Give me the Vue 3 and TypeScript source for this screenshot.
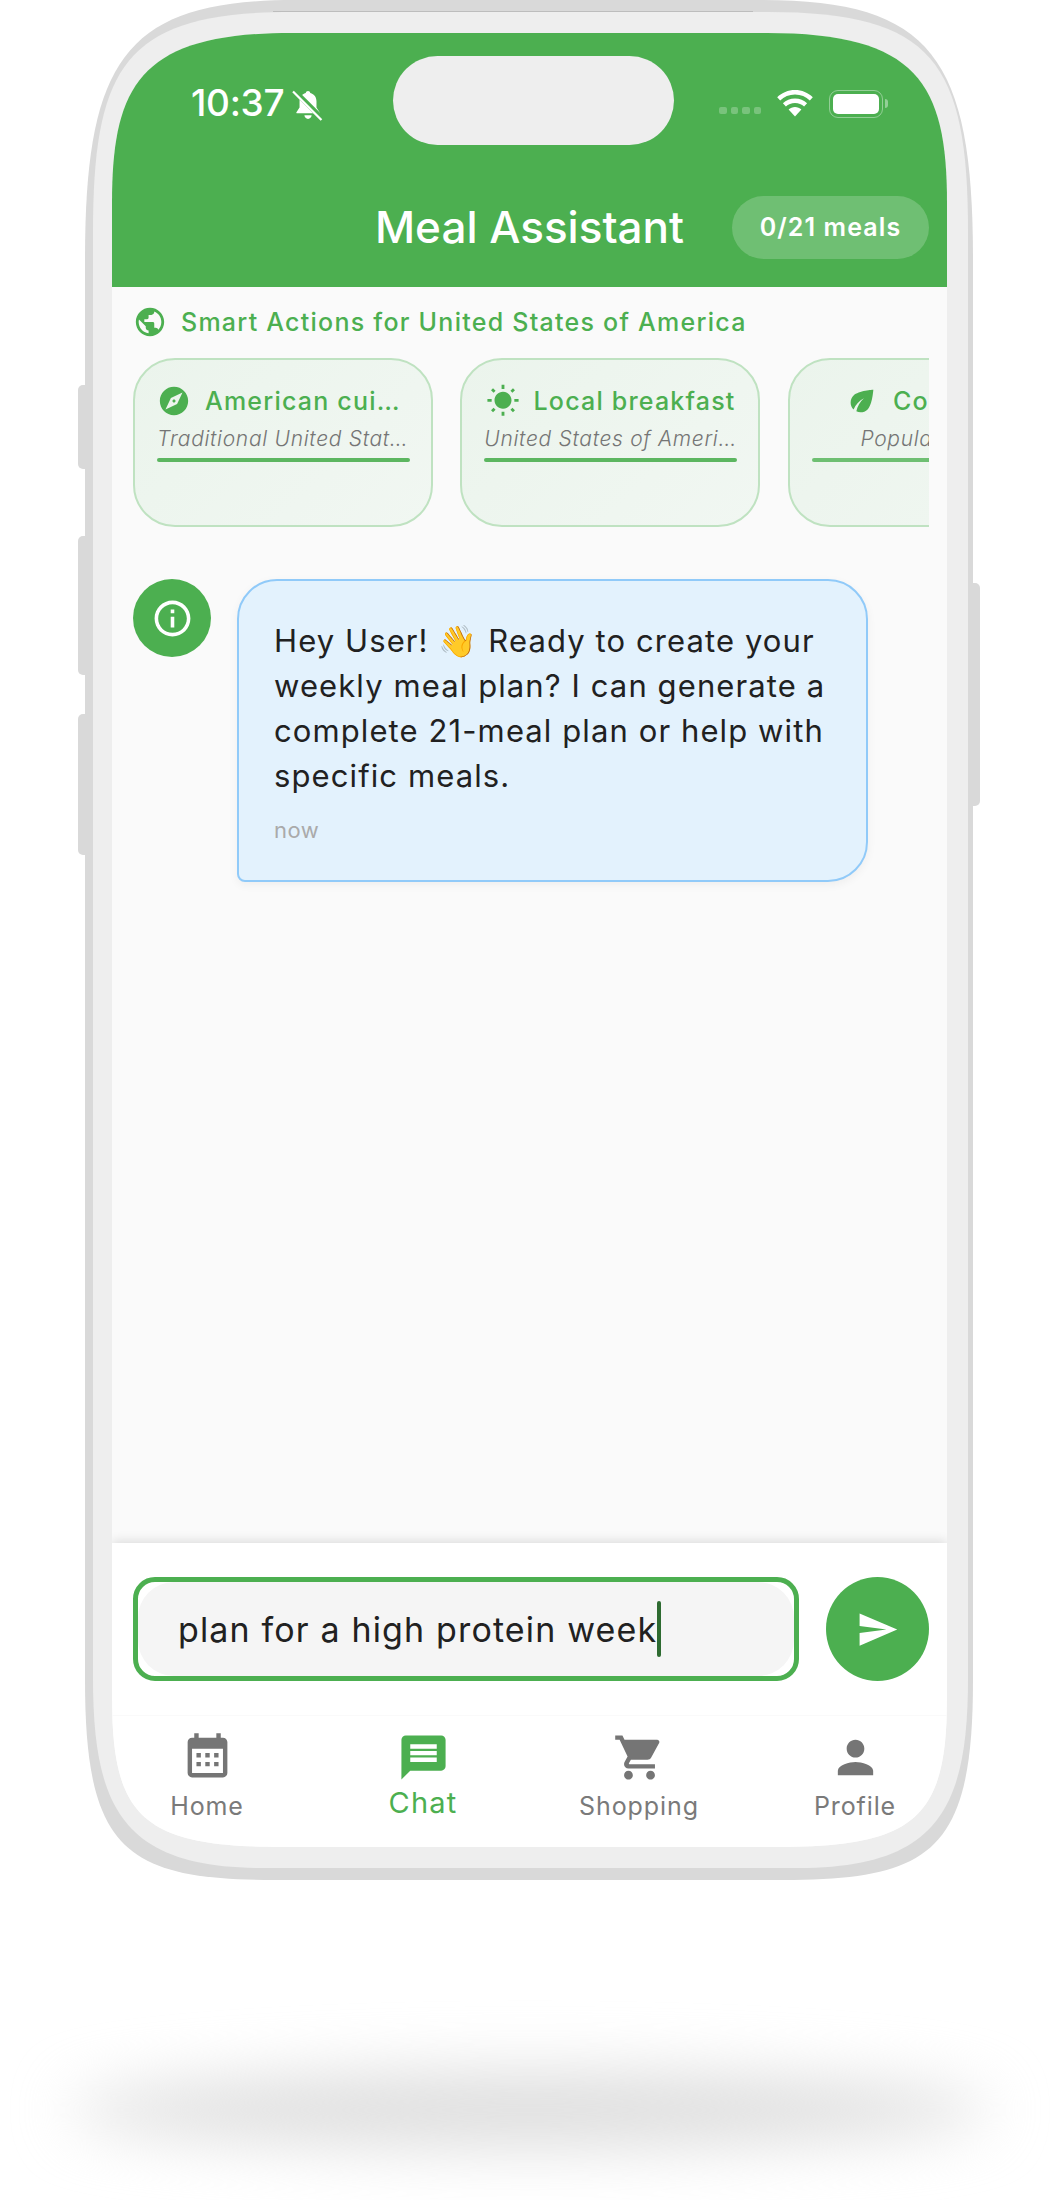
<script setup lang="ts">
import { ref } from 'vue'

interface Action {
  icon: string
  title: string
  sub: string
  faded?: boolean
}

const paths = {
  globe: 'M12 2C6.48 2 2 6.48 2 12s4.48 10 10 10 10-4.48 10-10S17.52 2 12 2zm-1 17.93c-3.95-.49-7-3.85-7-7.93 0-.62.08-1.21.21-1.79L9 15v1c0 1.1.9 2 2 2v1.93zm6.9-2.54c-.26-.81-1-1.39-1.9-1.39h-1v-3c0-.55-.45-1-1-1H8v-2h2c.55 0 1-.45 1-1V7h2c1.1 0 2-.9 2-2v-.41c2.93 1.19 5 4.06 5 7.41 0 2.08-.8 3.97-2.1 5.39z',
  compass: 'M12 10.9c-.61 0-1.1.49-1.1 1.1s.49 1.1 1.1 1.1c.61 0 1.1-.49 1.1-1.1s-.49-1.1-1.1-1.1zM12 2C6.48 2 2 6.48 2 12s4.48 10 10 10 10-4.48 10-10S17.52 2 12 2zm2.19 12.19L6 18l3.81-8.19L18 6l-3.81 8.19z',
  sun: 'M6.76 4.84l-1.8-1.79-1.41 1.41 1.79 1.79 1.42-1.41zM4 10.5H1v2h3v-2zm9-9.95h-2V3.5h2V.55zm7.45 3.91l-1.41-1.41-1.79 1.79 1.41 1.41 1.79-1.79zm-3.21 13.7l1.79 1.8 1.41-1.41-1.8-1.79-1.4 1.4zM20 10.5v2h3v-2h-3zm-8-5c-3.31 0-6 2.69-6 6s2.69 6 6 6 6-2.69 6-6-2.69-6-6-6zm-1 16.95h2V19.5h-2v2.95zm-7.45-3.91l1.41 1.41 1.79-1.8-1.41-1.41-1.79 1.8z',
  leaf: 'M6.05 8.05c-2.73 2.73-2.73 7.15-.02 9.88 1.47-3.4 4.09-6.24 7.36-7.93-2.77 2.34-4.71 5.61-5.39 9.32 2.6 1.23 5.8.78 7.95-1.37C19.43 14.47 20 4 20 4S9.53 4.57 6.05 8.05z',
  info: 'M11 7h2v2h-2zm0 4h2v6h-2zm1-9C6.48 2 2 6.48 2 12s4.48 10 10 10 10-4.48 10-10S17.52 2 12 2zm0 18c-4.41 0-8-3.59-8-8s3.59-8 8-8 8 3.59 8 8-3.59 8-8 8z',
  send: 'M2.01 21L23 12 2.01 3 2 10l15 2-15 2z',
  calendar: 'M19 3h-1V1h-2v2H8V1H6v2H5c-1.11 0-1.99.9-1.99 2L3 19c0 1.1.89 2 2 2h14c1.1 0 2-.9 2-2V5c0-1.1-.9-2-2-2zm0 16H5V8h14v11zM9 10H7v2h2zm4 0h-2v2h2zm4 0h-2v2h2zm-8 4H7v2h2zm4 0h-2v2h2zm4 0h-2v2h2z',
  chat: 'M20 2H4c-1.1 0-1.99.9-1.99 2L2 22l4-4h14c1.1 0 2-.9 2-2V4c0-1.1-.9-2-2-2zm-2 12H6v-2h12v2zm0-3H6V9h12v2zm0-3H6V6h12v2z',
  cart: 'M7 18c-1.1 0-1.99.9-1.99 2S5.9 22 7 22s2-.9 2-2-.9-2-2-2zM1 2v2h2l3.6 7.59-1.35 2.45c-.16.28-.25.61-.25.96 0 1.1.9 2 2 2h12v-2H7.42c-.14 0-.25-.11-.25-.25l.03-.12.9-1.63h7.45c.75 0 1.41-.41 1.75-1.03l3.58-6.49c.08-.14.12-.31.12-.48 0-.55-.45-1-1-1H5.21l-.94-2H1zm16 16c-1.1 0-1.99.9-1.99 2s.89 2 1.99 2 2-.9 2-2-.9-2-2-2z',
  person: 'M12 12c2.21 0 4-1.79 4-4s-1.79-4-4-4-4 1.79-4 4 1.79 4 4 4zm0 2c-2.67 0-8 1.34-8 4v2h16v-2c0-2.66-5.33-4-8-4z',
}

const actions = ref<Action[]>([
  { icon: paths.compass, title: 'American cuisine', sub: 'Traditional United States cuisine' },
  { icon: paths.sun, title: 'Local breakfast', sub: 'United States of America mornings' },
  { icon: paths.leaf, title: 'Cook local', sub: 'Popular dishes', faded: true },
])

const tabs = [
  { label: 'Home', icon: paths.calendar },
  { label: 'Chat', icon: paths.chat, active: true },
  { label: 'Shopping', icon: paths.cart },
  { label: 'Profile', icon: paths.person },
]

const draft = ref('plan for a high protein week')
</script>

<template>
  <div class="page">
    <div class="phone">
      <span class="side-btn btn-a"></span>
      <span class="side-btn btn-b"></span>
      <span class="side-btn btn-c"></span>
      <span class="side-btn btn-power"></span>

      <div class="shell">
        <div class="bezel">
          <div class="screen">
            <header class="header">
              <div class="status">
                <div class="status-left">
                  <span class="time">10:37</span>
                  <svg class="bell" viewBox="0 0 30 30">
                    <path d="M15.500 1c1.200 0 2 .8 2.200 2 3.800 1 6 4 6 8v6l3 4.500c.3.6 0 1-.6 1H4.900c-.6 0-.9-.4-.6-1l3-4.500v-6c0-4 2.200-7 6-8 .2-1.200 1-2 2.200-2zM12 24.500h7c-.2 2-1.600 3.500-3.500 3.500S12.200 26.500 12 24.500z" fill="#fff" />
                    <path d="M2.500 1 30 28.500" stroke="#4caf50" stroke-width="5" />
                    <path d="M1 1.500 28.500 29" stroke="#fff" stroke-width="2.200" />
                  </svg>
                </div>
                <div class="island"></div>
                <div class="status-right">
                  <div class="dots"><i></i><i></i><i></i><i></i></div>
                  <svg class="wifi" viewBox="0 0 36 27" fill="#fff">
                    <path d="M18 0C11 0 5 2.700.2 7.200l3 3.200C7 6.700 12.200 4.500 18 4.500s11 2.200 14.800 5.900l3-3.200C31 2.700 25 0 18 0z" />
                    <path d="M18 8.500c-4.700 0-9 1.900-12.100 4.800l3 3.200c2.400-2.200 5.500-3.500 9.100-3.500s6.700 1.300 9.100 3.500l3-3.200C27 10.400 22.700 8.500 18 8.500z" />
                    <path d="M18 17c-2.400 0-4.700.9-6.400 2.500L18 26.500l6.400-7C22.700 17.900 20.400 17 18 17z" />
                  </svg>
                  <div class="battery"><div class="battery-fill"></div></div>
                  <span class="battery-nub"></span>
                </div>
              </div>
              <div class="title-row">
                <h1 class="title">Meal Assistant</h1>
                <span class="pill">0/21 meals</span>
              </div>
            </header>

            <section class="smart">
              <div class="smart-head">
                <svg class="smart-icon" viewBox="0 0 24 24"><path :d="paths.globe" /></svg>
                <span>Smart Actions for United States of America</span>
              </div>
              <div class="cards">
                <div v-for="a in actions" :key="a.title" class="card">
                  <div class="card-head">
                    <svg class="card-icon" viewBox="0 0 24 24"><path :d="a.icon" /></svg>
                    <span class="card-title">{{ a.title }}</span>
                  </div>
                  <div class="card-sub">{{ a.sub }}</div>
                  <div class="card-bar" :class="{ faded: a.faded }"></div>
                </div>
              </div>
            </section>

            <main class="chat">
              <div class="avatar">
                <svg viewBox="0 0 24 24"><path :d="paths.info" /></svg>
              </div>
              <div class="bubble">
                <p class="bubble-text">Hey User! 👋 Ready to create your weekly meal plan? I can generate a complete 21-meal plan or help with specific meals.</p>
                <span class="bubble-time">now</span>
              </div>
            </main>

            <div class="composer">
              <div class="field">
                <div class="field-inner">
                  <span class="draft">{{ draft }}</span><span class="caret"></span>
                </div>
              </div>
              <button class="send">
                <svg viewBox="0 0 24 24"><path :d="paths.send" /></svg>
              </button>
            </div>

            <nav class="tabs">
              <div v-for="t in tabs" :key="t.label" class="tab" :class="{ active: t.active }">
                <svg viewBox="0 0 24 24"><path :d="t.icon" /></svg>
                <span>{{ t.label }}</span>
              </div>
            </nav>
          </div>
        </div>
      </div>
    </div>
    <div class="floor"></div>
  </div>
</template>

<style scoped>
.page {
  width: 1059px;
  height: 2200px;
  overflow: hidden;
  background: #fff;
  font-family: Inter, "Liberation Sans", sans-serif;
  padding-left: 85px;
  box-sizing: border-box;
}

.phone {
  position: relative;
  width: 888px;
  height: 1880px;
}

.shell {
  position: relative;
  height: 100%;
  box-sizing: border-box;
  padding: 12px 5px 12px 8px;
  background: #d9d9d9;
  clip-path: path('M0 260C0 60 40 0 210 0L678 0C848 0 888 60 888 260L888 1680C888 1850 848 1880 698 1880L190 1880C40 1880 0 1850 0 1680Z');
}

.shell::before {
  content: '';
  position: absolute;
  top: 11px;
  left: 188px;
  width: 480px;
  height: 1px;
  background: #bdbdbd;
}

.side-btn {
  position: absolute;
  left: -7px;
  width: 12px;
  background: #d9d9d9;
  border-radius: 5px 0 0 5px;
}

.btn-a { top: 385px; height: 84px; }
.btn-b { top: 536px; height: 139px; }
.btn-c { top: 714px; height: 141px; }

.btn-power {
  left: auto;
  right: -7px;
  top: 583px;
  height: 223px;
  border-radius: 0 5px 5px 0;
}

.bezel {
  height: 100%;
  box-sizing: border-box;
  padding: 21px 21px 21px 19px;
  background: #eee;
  clip-path: path('M0 220C0 50 35 0 200 0L675 0C840 0 875 50 875 220L875 1666C875 1796 845 1856 705 1856L170 1856C30 1856 0 1796 0 1666Z');
}

.screen {
  display: flex;
  flex-direction: column;
  height: 100%;
  background: #fafafa;
  clip-path: path('M0 170C0 50 30 0 180 0L655 0C805 0 835 50 835 170L835 1664C835 1784 805 1814 665 1814L170 1814C30 1814 0 1784 0 1664Z');
}

.header {
  height: 254px;
  flex-shrink: 0;
  box-sizing: border-box;
  padding-top: 23px;
  background: #4caf50;
  color: #fff;
}

.status {
  display: grid;
  grid-template-columns: 281px 281px 1fr;
  height: 89px;
}

.status-left {
  display: flex;
  align-items: center;
  gap: 8px;
  padding: 5px 0 0 79px;
}

.time {
  font-size: 37px;
  font-weight: 500;
  letter-spacing: -0.3px;
  line-height: 40px;
}

.bell {
  width: 31px;
  height: 31px;
  margin-top: 4px;
}

.island {
  background: #eee;
  border-radius: 45px;
}

.status-right {
  display: flex;
  align-items: center;
  padding: 6px 0 0 45px;
}

.dots {
  display: flex;
  gap: 4px;
  margin-top: 14px;
}

.dots i {
  width: 7.5px;
  height: 7.5px;
  background: rgba(255, 255, 255, 0.25);
  border-radius: 2px;
}

.wifi {
  width: 36px;
  height: 27px;
  margin-left: 16px;
}

.battery {
  width: 54px;
  height: 28px;
  margin-left: 16px;
  box-sizing: border-box;
  padding: 3px;
  border: 1.5px solid rgba(255, 255, 255, 0.4);
  border-radius: 9px;
}

.battery-fill {
  height: 100%;
  background: #fff;
  border-radius: 5px;
}

.battery-nub {
  width: 3px;
  height: 9px;
  margin-left: 2px;
  background: rgba(255, 255, 255, 0.4);
  border-radius: 0 3px 3px 0;
}

.title-row {
  display: grid;
  grid-template-columns: 1fr auto 1fr;
  align-items: center;
  height: 63px;
  margin-top: 50px;
  padding: 0 18px;
}

.title {
  grid-column: 2;
  margin: 0;
  font-size: 44px;
  font-weight: 500;
  line-height: 64px;
}

.pill {
  justify-self: end;
  box-sizing: border-box;
  height: 63px;
  width: 197px;
  text-align: center;
  font-size: 25px;
  font-weight: 600;
  line-height: 62px;
  letter-spacing: 1.1px;
  background: rgba(255, 255, 255, 0.2);
  border-radius: 32px;
}

.smart {
  flex-shrink: 0;
  padding: 20px 18px 0 21px;
}

.smart-head {
  display: flex;
  align-items: center;
  gap: 14px;
  height: 30px;
  font-size: 25px;
  font-weight: 550;
  letter-spacing: 1.25px;
  color: #4caf50;
}

.smart-icon {
  width: 34px;
  height: 34px;
  fill: #4caf50;
}

.cards {
  display: flex;
  gap: 27.3px;
  margin-top: 21px;
  overflow: hidden;
}

.card {
  flex: 0 0 300px;
  min-width: 0;
  box-sizing: border-box;
  height: 169px;
  padding: 24px 21.500px 0 22px;
  background: linear-gradient(135deg, #ebf4ec, #f1f7f2);
  border: 2px solid #bfe2c1;
  border-radius: 42px;
}

.card-head {
  display: flex;
  align-items: center;
  justify-content: center;
  gap: 14px;
  height: 34px;
}

.card-icon {
  flex-shrink: 0;
  width: 34px;
  height: 34px;
  fill: #4caf50;
}

.card-title {
  min-width: 0;
  overflow: hidden;
  white-space: nowrap;
  text-overflow: ellipsis;
  font-size: 25px;
  font-weight: 550;
  letter-spacing: 1.2px;
  color: #4caf50;
}

.card-sub {
  margin-top: 8px;
  overflow: hidden;
  white-space: nowrap;
  text-overflow: ellipsis;
  text-align: center;
  font-size: 21px;
  font-weight: 300;
  line-height: 26px;
  letter-spacing: 0.7px;
  font-style: italic;
  color: #757575;
}

.card-bar {
  height: 4px;
  margin-top: 6px;
  background: #5cb660;
  border-radius: 2px;
}

.card-bar.faded {
  background: #6ebf72;
}

.chat {
  flex: 1;
  display: flex;
  align-items: flex-start;
  gap: 26px;
  padding: 52px 0 0 21px;
}

.avatar {
  display: flex;
  align-items: center;
  justify-content: center;
  width: 78px;
  height: 78px;
  background: #4caf50;
  border-radius: 50%;
}

.avatar svg {
  width: 43px;
  height: 43px;
  fill: #fff;
}

.bubble {
  box-sizing: border-box;
  width: 631px;
  height: 303px;
  padding: 37px 30px 0 35px;
  background: #e3f2fd;
  border: 2px solid #90caf9;
  border-radius: 40px 40px 40px 8px;
  box-shadow: 0 3px 10px rgba(0, 0, 0, 0.05);
}

.bubble-text {
  margin: 0;
  font-size: 31px;
  line-height: 45px;
  letter-spacing: 1.1px;
  color: #212121;
}

.bubble-time {
  display: block;
  margin-top: 17px;
  font-size: 22px;
  line-height: 30px;
  letter-spacing: 0.5px;
  color: #aaa;
}

.composer {
  display: flex;
  flex-shrink: 0;
  align-items: center;
  gap: 27px;
  height: 172px;
  box-sizing: border-box;
  padding: 0 18px 0 21px;
  background: #fff;
  box-shadow: 0 -2px 10px rgba(0, 0, 0, 0.12);
}

.field {
  flex: 1;
  box-sizing: border-box;
  height: 104px;
  background: #fff;
  border: 5px solid #4caf50;
  border-radius: 22px;
}

.field-inner {
  display: flex;
  align-items: center;
  height: 100%;
  padding-left: 40px;
  background: #f5f5f5;
  border-radius: 36px;
}

.draft {
  font-size: 34px;
  letter-spacing: 1.15px;
  color: #212121;
}

.caret {
  width: 4px;
  height: 56px;
  background: #2e6b31;
  border-radius: 2px;
}

.send {
  display: flex;
  align-items: center;
  justify-content: center;
  width: 103px;
  height: 104px;
  padding: 0;
  border: 0;
  background: #4caf50;
  border-radius: 50%;
}

.send svg {
  width: 43px;
  height: 43px;
  fill: #fff;
}

.tabs {
  display: grid;
  flex-shrink: 0;
  grid-template-columns: repeat(4, 216px);
  justify-content: center;
  height: 132px;
  padding-left: 3px;
  background: #fff;
  border-top: 1px solid #fafafa;
  box-sizing: border-box;
}

.tab {
  display: flex;
  flex-direction: column;
  align-items: center;
  padding-top: 15px;
  font-size: 25px;
  letter-spacing: 0.9px;
  color: #7a7a7a;
}

.tab svg {
  width: 53px;
  height: 53px;
  fill: #757575;
}

.tab span {
  margin-top: 7px;
  line-height: 30px;
}

.tab.active {
  color: #4caf50;
  font-size: 29px;
  letter-spacing: 1.2px;
}

.tab.active span {
  margin-top: 4px;
}

.tab.active svg {
  fill: #4caf50;
}

.floor {
  width: 920px;
  height: 76px;
  margin: 192px 0 0 -15px;
  background: #dedede;
  border-radius: 50%;
  filter: blur(30px);
}
</style>
